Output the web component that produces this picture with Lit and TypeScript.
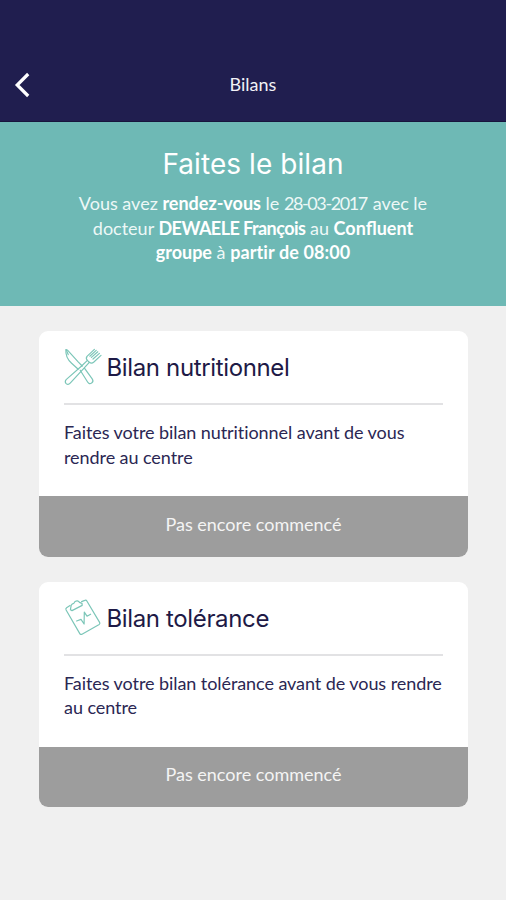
import { LitElement, html, svg, css } from "lit";
import { customElement, property } from "lit/decorators.js";

const cutlery = svg`
  <path d="M3.5 2.2 L1.9 1.6 Q1.2 9.5 7.6 15.2 L14.2 21.2 M3.5 2.2 L14.4 14.2 L18.2 18" />
  <path d="M2.2 1.8 L4.2 6.6" />
  <path d="M16.2 22.2 L23.6 34 Q25.2 36.6 27.6 35 Q30 33.2 28.2 30.8 L20.6 20.4" />
  <path d="M17.6 18 L2.4 31.4 Q.3 33.6 2.2 35.6 Q4.2 37.4 6.2 35.2 L20.5 19.6" />
  <path d="M17.6 18 L23.4 12.4 M20.5 19.6 L25.3 14.3" />
  <path d="M30.4 1.4 L23 8.4 Q21.5 10.8 23.4 12.4 L25.3 14.3 Q27.6 16 29.9 14 L37 7.4 M35.4 5.4 L29 11 M33.8 3.8 L27.4 9.4 M32.2 2.4 L25.8 8.2" />`;

const clipboard = svg`
  <path d="M6 6.5 L2.6 8.7 Q1.4 9.6 2.1 11 L15.8 34.6 Q16.6 36 18 35.2 L35.2 25.4 Q36.3 24.7 35.6 23.4 L23 2.2 Q22.2 .8 20.8 1.4 L17.6 2.6" />
  <path d="M6.4 10.8 L7.2 6.2 Q8 4.6 9.8 4.4 Q10.8 1.6 13.4 1.9 Q15 2.2 15.4 3.4 L18 4.4 L18.2 6.4 L8 11.6 Z" />
  <path d="M12.6 22 L17 20.4 L20.1 25 L20.3 13.2 L23 17.2 L26.6 15.2" />`;

@customElement("bilan-card")
export class BilanCard extends LitElement {
  @property() heading = "";
  @property() icon = "";
  @property() status = "";

  static styles = css`
    :host {
      display: flex;
      flex-direction: column;
      box-sizing: border-box;
      height: 225.5px;
      border-radius: 9px;
      background: #fff;
      overflow: hidden;
    }
    .body {
      flex: 1;
      padding: 0 25px;
    }
    .head {
      display: flex;
      align-items: center;
      gap: 4.5px;
      height: 72px;
      border-bottom: 2px solid #e2e2e4;
    }
    .icon {
      width: 38px;
      height: 38px;
      flex: none;
      fill: none;
      stroke: #7cc6b8;
      stroke-width: 1.2;
      stroke-linejoin: round;
      stroke-linecap: round;
    }
    h2 {
      margin: 0;
      padding-top: 2px;
      font: 400 24px/30px Inter, sans-serif;
      letter-spacing: -0.36px;
      color: #1e1a46;
      white-space: nowrap;
    }
    .text {
      margin: 15px 0 0;
      font: 400 18px/24.5px Lato, sans-serif;
      letter-spacing: -0.07px;
      font-variant-ligatures: none;
      color: #2b2753;
      white-space: nowrap;
    }
    .status {
      height: 60.5px;
      padding-bottom: 5px;
      box-sizing: border-box;
      display: flex;
      align-items: center;
      justify-content: center;
      background: #9d9d9d;
      color: #f4f4f4;
      font: 400 18px/24px Lato, sans-serif;
    }
  `;

  render() {
    return html`
      <div class="body">
        <div class="head">
          <svg class="icon" viewBox="0 0 38 38">
            ${this.icon === "cutlery" ? cutlery : clipboard}
          </svg>
          <h2>${this.heading}</h2>
        </div>
        <p class="text"><slot></slot></p>
      </div>
      <div class="status">${this.status}</div>
    `;
  }
}

@customElement("app-root")
export class AppRoot extends LitElement {
  static styles = css`
    :host {
      display: flex;
      flex-direction: column;
      height: 900px;
      background: #f0f0f0;
      overflow: hidden;
    }
    .bar {
      box-sizing: border-box;
      height: 122px;
      padding: 48px 14px 0;
      display: grid;
      grid-template-columns: 24px 1fr 24px;
      align-items: center;
      background: #201e4f;
      border-bottom: 1px solid #17153d;
      color: #f2f2f6;
    }
    .back {
      width: 18px;
      height: 26px;
      fill: none;
      stroke: #fff;
      stroke-width: 3.2;
    }
    .title {
      padding-bottom: 2px;
      text-align: center;
      font: 400 18px/24px Lato, sans-serif;
    }
    .banner {
      box-sizing: border-box;
      height: 184px;
      padding-top: 25px;
      background: #6eb9b5;
      color: #fff;
      text-align: center;
    }
    h1 {
      margin: 0 0 10px;
      font: 400 28px/34px Inter, sans-serif;
      letter-spacing: 0.07px;
    }
    .lead {
      margin: 0;
      font: 400 18px/24.5px Lato, sans-serif;
      white-space: nowrap;
      color: #edf8f7;
    }
    b {
      font-weight: 700;
      color: #fff;
    }
    .date {
      letter-spacing: -1.4px;
      margin-right: 1.4px;
    }
    .name {
      letter-spacing: -0.55px;
    }
    .time {
      letter-spacing: 0.1px;
      font-variant-ligatures: none;
    }
    .cards {
      display: flex;
      flex-direction: column;
      gap: 25px;
      padding: 25px 38px 0 39px;
    }
  `;

  render() {
    return html`
      <header class="bar">
        <svg class="back" viewBox="0 0 18 26"><path d="M14.2 2 L3.2 13 L14.2 24" /></svg>
        <span class="title">Bilans</span>
      </header>
      <section class="banner">
        <h1>Faites le bilan</h1>
        <p class="lead">
          Vous avez <b>rendez-vous</b> le <span class="date">28-03-2017</span> avec le<br />
          docteur <b class="name">DEWAELE François</b> au <b>Confluent</b><br />
          <b>groupe</b> à <b class="time">partir de 08:00</b>
        </p>
      </section>
      <main class="cards">
        <bilan-card icon="cutlery" heading="Bilan nutritionnel" status="Pas encore commencé"
          >Faites votre bilan nutritionnel avant de vous<br />rendre au centre</bilan-card
        >
        <bilan-card icon="clipboard" heading="Bilan tolérance" status="Pas encore commencé"
          >Faites votre bilan tolérance avant de vous rendre<br />au centre</bilan-card
        >
      </main>
    `;
  }
}
